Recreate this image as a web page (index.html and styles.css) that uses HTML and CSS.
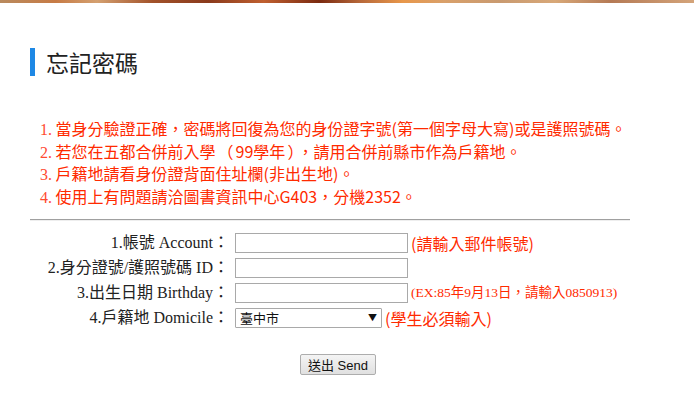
FILE: index.html
```html
<!DOCTYPE html>
<html lang="zh-Hant">
<head>
<meta charset="utf-8">
<title>忘記密碼</title>
<link rel="stylesheet" href="styles.css">
</head>
<body>
<div class="topbar"></div>
<div class="main">
  <h1 class="title"><span class="bar"></span>忘記密碼</h1>
  <ol class="notes">
    <li><span class="num">1.</span> 當身分驗證正確，密碼將回復為您的身份證字號(第一個字母大寫)或是護照號碼。</li>
    <li><span class="num">2.</span> 若您在五都合併前入學<span class="wide">（</span>99學年<span class="wide">）</span>，請用合併前縣市作為戶籍地。</li>
    <li><span class="num">3.</span> 戶籍地請看身份證背面住址欄(非出生地)。</li>
    <li><span class="num">4.</span> 使用上有問題請洽圖書資訊中心G403，分機2352。</li>
  </ol>
  <div class="rule"></div>
  <form class="form">
    <label class="lbl" for="acc">1.帳號 Account：</label>
    <div class="field"><input id="acc" class="inp" type="text"><span class="hint">(請輸入郵件帳號)</span></div>
    <label class="lbl" for="pid">2.身分證號/護照號碼 ID：</label>
    <div class="field"><input id="pid" class="inp" type="text"></div>
    <label class="lbl" for="bd">3.出生日期 Birthday：</label>
    <div class="field"><input id="bd" class="inp" type="text"><span class="hint small">(EX:85年9月13日，請輸入0850913)</span></div>
    <label class="lbl" for="dom">4.戶籍地 Domicile：</label>
    <div class="field"><div class="sel"><span>臺中市</span><span class="arrow">▼</span></div><span class="hint">(學生必須輸入)</span></div>
  </form>
  <div class="actions"><button class="btn" type="button">送出 Send</button></div>
</div>
</body>
</html>
```

FILE: styles.css
```css
html, body {
  margin: 0;
  background: #fff;
}
body {
  font-family: "Liberation Serif", "Noto Sans CJK TC", serif;
  color: #222;
}
.topbar {
  height: 3px;
  background: linear-gradient(90deg, #b98a5e 0%, #c77b45 8%, #d4a070 14%, #a2522a 22%, #8a3a1c 30%, #c06030 38%, #7a2a10 46%, #b8693a 52%, #e8974a 58%, #d9a06a 64%, #c99a70 72%, #d8a878 80%, #b57a55 88%, #d4a47a 100%);
}
.main {
  padding: 0 0 0 30px;
  width: 600px;
}
.title {
  display: flex;
  align-items: center;
  margin: 45px 0 0 0;
  height: 28px;
  font-family: "Noto Sans CJK TC", sans-serif;
  font-weight: normal;
  font-size: 23px;
  line-height: 28px;
  color: #222;
}
.bar {
  width: 5px;
  height: 28px;
  background: #1e88e5;
  margin-right: 11px;
}
.notes {
  list-style: none;
  margin: 41px 0 0 0;
  padding: 0 0 0 10px;
  font-family: "Noto Sans CJK TC", sans-serif;
  font-size: 16px;
  line-height: 22.7px;
  color: #ff2a00;
  white-space: nowrap;
}
.notes li {
  height: 22.7px;
}
.wide {
  margin: 0 2px;
}
.num {
  font-family: "Liberation Serif", serif;
  font-size: 16px;
  line-height: 1;
  color: #ff4a30;
}
.rule {
  margin-top: 11px;
  width: 600px;
  border-top: 1px solid #a0a0a0;
  border-bottom: 1px solid #eee;
}
.form {
  display: grid;
  grid-template-columns: 199px auto;
  column-gap: 6px;
  row-gap: 5px;
  margin-top: 12px;
}
.lbl {
  text-align: right;
  font-size: 16px;
  line-height: 20px;
  height: 20px;
  color: #222;
  white-space: nowrap;
}
.field {
  display: flex;
  align-items: center;
  height: 20px;
}
.inp {
  box-sizing: border-box;
  width: 173px;
  height: 20px;
  margin: 0;
  border: 1px solid #a9a9a9;
  padding: 0 2px;
}
.hint {
  margin-left: 3px;
  font-family: "Noto Sans CJK TC", sans-serif;
  font-size: 16px;
  line-height: 20px;
  color: #ff2a00;
  white-space: nowrap;
}
.hint.small {
  font-family: "Liberation Serif", "Noto Sans CJK TC", serif;
  font-size: 13.5px;
}
.sel {
  box-sizing: border-box;
  width: 147px;
  height: 20px;
  border: 1px solid #a9a9a9;
  border-radius: 1px;
  display: flex;
  align-items: center;
  justify-content: space-between;
  padding: 0 4px 0 4px;
  font-family: "Noto Sans CJK TC", sans-serif;
  font-size: 13px;
  color: #111;
}
.arrow {
  font-size: 9px;
  color: #111;
}
.actions {
  display: flex;
  justify-content: center;
  padding-left: 16px;
  margin-top: 26px;
}
.btn {
  box-sizing: border-box;
  height: 21px;
  width: 76px;
  padding: 0;
  border: 1px solid #adadad;
  border-radius: 2px;
  background: linear-gradient(#f4f4f4, #e0e0e0);
  font-family: "Liberation Sans", "Noto Sans CJK TC", sans-serif;
  font-size: 13px;
  color: #111;
}
```
